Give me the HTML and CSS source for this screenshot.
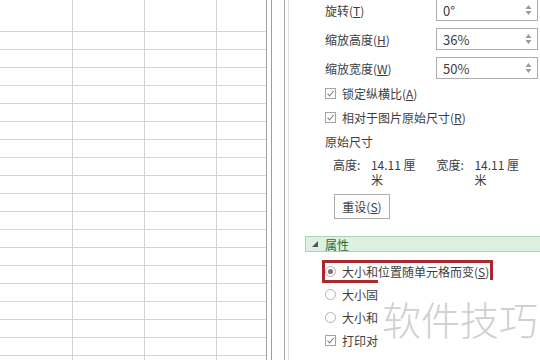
FILE: index.html
```html
<!DOCTYPE html>
<html lang="zh-CN">
<head>
    <meta charset="UTF-8">
    <title>设置图片格式</title>
    <link rel="stylesheet" href="styles.css">
</head>
<body>
    <div class="window">
        <!-- 工作表区域 -->
        <div class="sheet">
            <div class="sheet-top"></div>
            <div class="sheet-body"></div>
        </div>
        <div class="gutter"></div>
        <div class="splitter"></div>
        <div class="pad"></div>

        <!-- 设置图片格式 窗格 -->
        <div class="panel">
            <div class="field first">
                <span class="label">旋转(<u>T</u>)</span>
                <div class="spin"><span>0°</span><svg class="arrows" width="7" height="12" viewBox="0 0 7 12"><path d="M3.5 1 L6.5 5 L0.5 5 Z M3.5 11 L6.5 7 L0.5 7 Z" fill="#9a9a9a"/></svg></div>
            </div>
            <div class="field">
                <span class="label">缩放高度(<u>H</u>)</span>
                <div class="spin"><span>36%</span><svg class="arrows" width="7" height="12" viewBox="0 0 7 12"><path d="M3.5 1 L6.5 5 L0.5 5 Z M3.5 11 L6.5 7 L0.5 7 Z" fill="#9a9a9a"/></svg></div>
            </div>
            <div class="field">
                <span class="label">缩放宽度(<u>W</u>)</span>
                <div class="spin"><span>50%</span><svg class="arrows" width="7" height="12" viewBox="0 0 7 12"><path d="M3.5 1 L6.5 5 L0.5 5 Z M3.5 11 L6.5 7 L0.5 7 Z" fill="#9a9a9a"/></svg></div>
            </div>

            <div class="option">
                <svg class="box" width="11" height="11" viewBox="0 0 11 11"><rect x="0.5" y="0.5" width="10" height="10" fill="#fff" stroke="#a3a3a3"/><path d="M2.5 5.5 L4.5 7.8 L8.6 3" fill="none" stroke="#808080" stroke-width="1.1"/></svg>
                <span>锁定纵横比(<u>A</u>)</span>
            </div>
            <div class="option">
                <svg class="box" width="11" height="11" viewBox="0 0 11 11"><rect x="0.5" y="0.5" width="10" height="10" fill="#fff" stroke="#a3a3a3"/><path d="M2.5 5.5 L4.5 7.8 L8.6 3" fill="none" stroke="#808080" stroke-width="1.1"/></svg>
                <span>相对于图片原始尺寸(<u>R</u>)</span>
            </div>
            <div class="option plain">原始尺寸</div>

            <div class="dims">
                <span class="dim-label">高度:</span>
                <span class="dim-value">14.11 厘米</span>
                <span class="dim-label">宽度:</span>
                <span class="dim-value">14.11 厘米</span>
            </div>

            <button class="reset">重设(<u>S</u>)</button>

            <div class="section">
                <svg class="twisty" width="6" height="6" viewBox="0 0 6 6"><path d="M6 0 L6 6 L0 6 Z" fill="#555"/></svg>
                <span>属性</span>
            </div>

            <div class="radio highlight">
                <svg class="dot" width="11" height="11" viewBox="0 0 11 11"><circle cx="5.5" cy="5.5" r="5" fill="#fff" stroke="#b0b0b0"/><circle cx="5.5" cy="5.5" r="2.6" fill="#7a7a7a"/></svg>
                <span>大小和位置随单元格而变(<u>S</u>)</span>
            </div>
            <div class="radio">
                <svg class="dot" width="11" height="11" viewBox="0 0 11 11"><circle cx="5.5" cy="5.5" r="5" fill="#fff" stroke="#b0b0b0"/></svg>
                <span>大小固</span>
            </div>
            <div class="radio">
                <svg class="dot" width="11" height="11" viewBox="0 0 11 11"><circle cx="5.5" cy="5.5" r="5" fill="#fff" stroke="#b0b0b0"/></svg>
                <span>大小和</span>
            </div>
            <div class="radio">
                <svg class="box" width="11" height="11" viewBox="0 0 11 11"><rect x="0.5" y="0.5" width="10" height="10" fill="#fff" stroke="#a3a3a3"/><path d="M2.5 5.5 L4.5 7.8 L8.6 3" fill="none" stroke="#808080" stroke-width="1.1"/></svg>
                <span>打印对</span>
            </div>

            <!-- 水印遮挡 -->
            <div class="watermark">软件技巧</div>
        </div>
    </div>
</body>
</html>
```

FILE: styles.css
```css
body {
    margin: 0;
    background: #fff;
    font-family: "Noto Sans CJK SC", "Liberation Sans", sans-serif;
    font-size: 12px;
    color: #3d3d3d;
    overflow: hidden;
}

.window {
    display: flex;
    height: 360px;
    overflow: hidden;
}

/* 工作表网格 */
.sheet {
    flex: none;
    width: 266px;
    border-right: 1px solid #a2a2a2;
    background-image: linear-gradient(to right, transparent 72px, #d2d2d2 72px, #d2d2d2 73px, transparent 73px),
                      linear-gradient(to right, transparent 144px, #d2d2d2 144px, #d2d2d2 145px, transparent 145px),
                      linear-gradient(to right, transparent 216px, #d2d2d2 216px, #d2d2d2 217px, transparent 217px);
}

.sheet-top {
    height: 31px;
}

.sheet-body {
    height: 329px;
    background: repeating-linear-gradient(to bottom, #d4d4d4 0, #d4d4d4 1px, transparent 1px, transparent 18px);
}

.gutter {
    flex: none;
    width: 4px;
}

.splitter {
    flex: none;
    width: 12px;
    border-left: 1px solid #9c9c9c;
    border-right: 1px solid #a8a8a8;
}

.pad {
    flex: none;
    width: 3px;
    border-right: 1px solid #dedede;
}

/* 窗格 */
.panel {
    position: relative;
    flex: 1;
    min-width: 0;
}

    .panel u {
        text-decoration: underline;
        text-underline-offset: 1px;
    }

.field {
    display: flex;
    align-items: center;
    height: 22px;
    margin-bottom: 7px;
    padding-left: 36px;
}

    .field.first {
        margin-top: -1px;
    }

    .field .label {
        width: 111px;
    }

.spin {
    display: flex;
    align-items: center;
    justify-content: space-between;
    box-sizing: border-box;
    width: 102px;
    height: 22px;
    padding: 0 5px 0 6px;
    border: 1px solid #acacac;
    font-size: 13px;
}

.option {
    display: flex;
    align-items: center;
    height: 24px;
    padding-left: 36px;
}

.field + .option {
    margin-top: -5px;
}

.box,
.dot {
    flex: none;
    margin-right: 6px;
}

.option.plain {
    height: 25px;
}

.dims {
    display: flex;
    align-items: flex-start;
    margin-top: 3px;
    padding-left: 44px;
    line-height: 15px;
}

.dim-label {
    width: 40px;
}

.dim-value {
    width: 48px;
    margin-right: 20px;
}

.reset {
    display: block;
    box-sizing: border-box;
    width: 56px;
    height: 25px;
    margin: 7px 0 0 45px;
    padding: 0;
    border: 1px solid #adadad;
    background: #fdfdfd;
    font-family: inherit;
    font-size: 12px;
    color: #3d3d3d;
}

.section {
    display: flex;
    align-items: center;
    box-sizing: border-box;
    height: 16px;
    margin: 17px 0 0 16px;
    padding-left: 6px;
    background: #ddf0e2;
    border: 1px solid #a9d5b5;
    border-right: none;
    color: #2b6a3a;
}

    .section .twisty {
        margin-right: 7px;
    }

.radio {
    display: flex;
    align-items: center;
    height: 23px;
    padding-left: 36px;
    white-space: nowrap;
}

.section + .radio {
    margin-top: 8px;
}

.radio.highlight {
    box-sizing: border-box;
    width: 171px;
    margin-left: 33px;
    padding-left: 0;
    border: 3px solid #a8282d;
}

.watermark {
    position: absolute;
    left: 89px;
    top: 280px;
    right: 0;
    bottom: 0;
    padding: 16px 0 0 4px;
    background: #fff;
    font-size: 39px;
    font-weight: 300;
    line-height: 44px;
    color: #d0d0d0;
}
```
